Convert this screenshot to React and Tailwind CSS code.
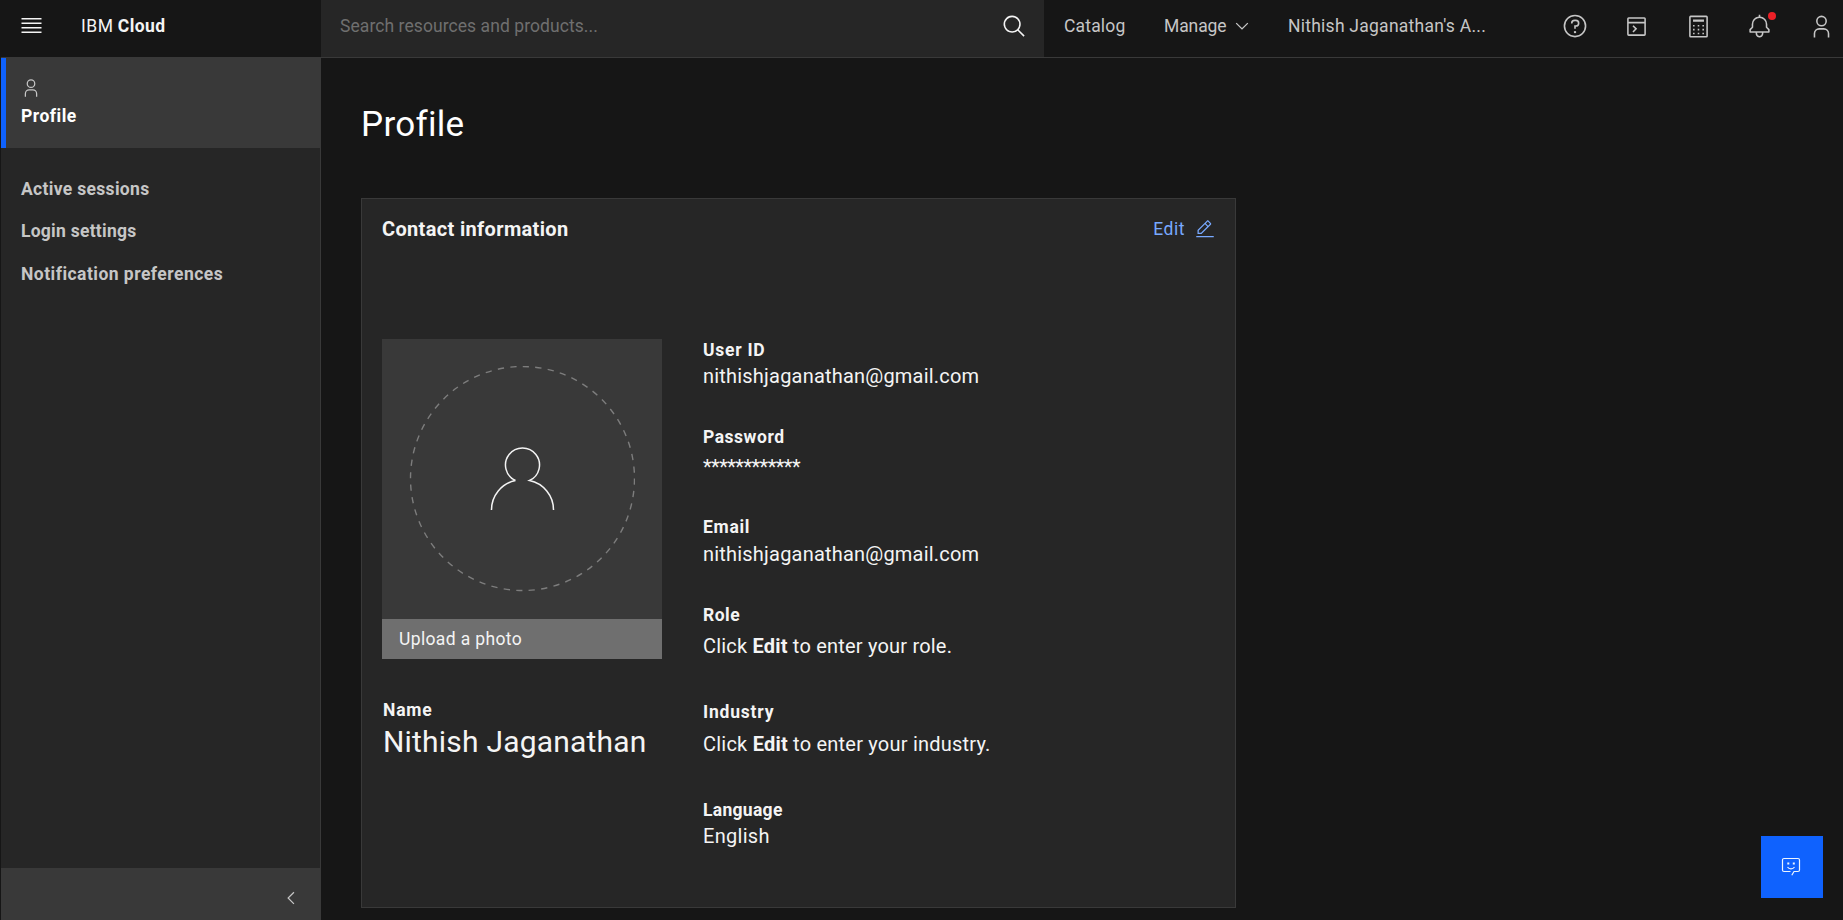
import React from "react";

const Svg = ({ size, children, className = "" }) => (
  <svg viewBox="0 0 32 32" width={size} height={size} fill="currentColor" className={`shrink-0 ${className}`}>{children}</svg>
);

const UserPath = () => (
  <path d="M16 4a5 5 0 1 1-5 5 5 5 0 0 1 5-5m0-2a7 7 0 1 0 7 7 7 7 0 0 0-7-7zM26 30h-2v-5a5 5 0 0 0-5-5h-6a5 5 0 0 0-5 5v5H6v-5a7 7 0 0 1 7-7h6a7 7 0 0 1 7 7z" />
);

function Header() {
  return (
    <header className="flex h-[58px] shrink-0 border-b border-[#393939] text-[17.5px] leading-6 text-[#c6c6c6]">
      <div className="flex w-[320px] shrink-0 pt-[13px]">
        <svg viewBox="0 0 20 20" width="25" height="25" fill="#f4f4f4" className="ml-[18px] shrink-0">
          <path d="M2 14.8h16V16H2zM2 11.2h16v1.2H2zM2 7.6h16v1.2H2zM2 4h16v1.2H2z" />
        </svg>
        <div className="ml-[37px] mt-px whitespace-nowrap text-[#f4f4f4]">
          <span className="tracking-[0.5px]">IBM</span> <b className="font-bold tracking-[0.4px]">Cloud</b>
        </div>
      </div>
      <div className="flex w-[723px] shrink-0 justify-between bg-[#262626] pl-[19px] pr-[17px] pt-[14px] tracking-[0.07px] text-[#6f6f6f]">
        <span>Search resources and products...</span>
        <Svg size={25} className="text-[#f4f4f4]">
          <path d="m29 27.586-7.552-7.552a11.018 11.018 0 1 0-1.414 1.414L27.586 29ZM4 13a9 9 0 1 1 9 9 9.01 9.01 0 0 1-9-9Z" />
        </Svg>
      </div>
      <nav className="flex w-[500px] shrink-0 pl-5 pt-[14px] whitespace-nowrap">
        <div className="w-[100px] tracking-[0.18px]">Catalog</div>
        <div className="flex w-[124px] justify-between pr-9 tracking-[-0.1px]">
          Manage
          <svg viewBox="0 0 16 16" width="20" height="20" fill="currentColor" className="mt-[2px] shrink-0"><path d="M8 11 3 6l.7-.7L8 9.6l4.3-4.3.7.7z" /></svg>
        </div>
        <span className="tracking-[0.25px]">Nithish Jaganathan's A...</span>
      </nav>
      <div className="grid h-[52px] shrink-0 grid-cols-[61px_62px_62px_61px_62px] place-items-center">
        <Svg size={26}>
          <path d="M16 2a14 14 0 1 0 14 14A14 14 0 0 0 16 2zm0 26a12 12 0 1 1 12-12 12 12 0 0 1-12 12z" />
          <circle cx="16" cy="23.5" r="1.5" />
          <path d="M17 8h-1.5A4.49 4.49 0 0 0 11 12.5v.5h2v-.5a2.5 2.5 0 0 1 2.5-2.5H17a2.5 2.5 0 0 1 0 5h-2v4.5h2V17a4.5 4.5 0 0 0 0-9z" />
        </Svg>
        <Svg size={25}>
          <path d="M6 4h20a2 2 0 0 1 2 2v20a2 2 0 0 1-2 2H6a2 2 0 0 1-2-2V6a2 2 0 0 1 2-2zM6 6v4h20V6zM6 12v14h20V12z" fillRule="evenodd" />
          <path d="m11.500 15 4 4-4 4" fill="none" stroke="currentColor" strokeWidth="2" />
        </Svg>
        <Svg size={25}>
          <path d="M26 4v24H6V4h20m0-2H6a2 2 0 0 0-2 2v24a2 2 0 0 0 2 2h20a2 2 0 0 0 2-2V4a2 2 0 0 0-2-2z" />
          <path d="M9 7h14v3H9zM9 14h2v2H9zM15 14h2v2h-2zM21 14h2v2h-2zM9 19h2v2H9zM15 19h2v2h-2zM21 19h2v2h-2zM9 24h2v2H9zM15 24h2v2h-2zM21 24h2v2h-2z" />
        </Svg>
        <div className="relative">
          <Svg size={25}><path d="M28.707 19.293 26 16.586V13a10.014 10.014 0 0 0-9-9.95V1h-2v2.05A10.014 10.014 0 0 0 6 13v3.586l-2.707 2.707A1 1 0 0 0 3 20v3a1 1 0 0 0 1 1h7v.777a5.152 5.152 0 0 0 4.5 5.199A5.006 5.006 0 0 0 21 25v-1h7a1 1 0 0 0 1-1v-3a1 1 0 0 0-.293-.707zM19 25a3 3 0 0 1-6 0v-1h6zm8-3H5v-1.586l2.707-2.707A1 1 0 0 0 8 17v-4a8 8 0 0 1 16 0v4a1 1 0 0 0 .293.707L27 20.414z" /></Svg>
          <span className="absolute -top-[2px] left-[21px] size-2 rounded-full bg-[#ec2027]" />
        </div>
        <Svg size={25}><UserPath /></Svg>
      </div>
    </header>
  );
}

function Sidebar() {
  return (
    <aside className="flex w-[320px] shrink-0 flex-col border-r border-[#393939] bg-[#262626] text-[17.5px] font-bold leading-6 text-[#c6c6c6]">
      <div className="-mr-px h-[90px] border-l-[5px] border-[#0f62fe] bg-[#393939] pl-[15px] pt-5">
        <Svg size={20}><UserPath /></Svg>
        <div className="mt-1.5 tracking-[0.49px] text-white">Profile</div>
      </div>
      <nav className="flex flex-col gap-[18px] pl-5 pt-[29px]">
        <div className="tracking-[0.32px]">Active sessions</div>
        <div className="tracking-[0.26px]">Login settings</div>
        <div className="mt-px tracking-[0.47px]">Notification preferences</div>
      </nav>
      <div className="-mr-px mt-auto flex h-[52px] items-center justify-end bg-[#393939] pr-[20px] pt-2">
        <svg viewBox="0 0 16 16" width="20" height="20" fill="currentColor"><path d="m5 8 5-5 .7.7L6.4 8l4.3 4.3-.7.7z" /></svg>
      </div>
    </aside>
  );
}

function Field({ label, labelClass, className = "", valueClass, children }) {
  return (
    <div className={className}>
      <div className={`text-[17.5px] font-bold leading-6 ${labelClass}`}>{label}</div>
      <div className={`text-xl leading-7 ${valueClass}`}>{children}</div>
    </div>
  );
}

function Card() {
  return (
    <section className="h-[710px] w-[875px] border border-[#393939] bg-[#262626] px-5 pt-4 text-[#f4f4f4]">
      <div className="flex justify-between">
        <h2 className="text-xl font-bold leading-7 tracking-[0.34px]">Contact information</h2>
        <a className="flex gap-[10px] pt-[2px] text-[17.5px] leading-6 tracking-[0.55px] text-[#78a9ff]">
          Edit
          <Svg size={20} className="mt-0.5"><path d="M2 27h28v2H2zM25.4 9c.8-.8.8-2 0-2.8l-3.6-3.6c-.8-.8-2-.8-2.8 0l-15 15V24h6.4zm-5-5L24 7.6l-3 3L17.400 7zM6 22v-3.600l10-10 3.600 3.600-10 10z" /></Svg>
        </a>
      </div>
      <div className="mt-[95px] flex gap-10">
        <div className="w-[280px] pt-px">
          <div className="flex h-[280px] items-center justify-center bg-[#393939]">
            <svg viewBox="0 0 226 226" width="226" height="226" fill="none">
              <circle cx="113.500" cy="112.500" r="112" stroke="#7d7d7d" strokeWidth="1.400" strokeDasharray="6.280 6.280" />
              <path d="M106.500 114.500a17 17 0 1 1 14 0a30 30 0 0 1 24 29.500M106.500 114.500a30 30 0 0 0-24 29.500" stroke="#f4f4f4" strokeWidth="1.500" />
            </svg>
          </div>
          <div className="h-10 bg-[#6f6f6f] pl-[17px] pt-2 text-[17.5px] leading-6 tracking-[0.36px]">Upload a photo</div>
          <div className="mt-[39px] pl-px text-[17.5px] font-bold leading-6 tracking-[0.8px]">Name</div>
          <div className="mt-0.5 whitespace-nowrap pl-px text-[30px] leading-9 tracking-[0.2px]">Nithish Jaganathan</div>
        </div>
        <div className="pl-px">
          <Field label="User ID" labelClass="tracking-[0.75px]" valueClass="tracking-[0.2px]">nithishjaganathan@gmail.com</Field>
          <Field label="Password" labelClass="tracking-[0.52px]" className="mt-[35px]" valueClass="translate-y-1 tracking-[-0.53px]">************</Field>
          <Field label="Email" labelClass="tracking-[0.7px]" className="mt-[38px]" valueClass="mt-px tracking-[0.2px]">nithishjaganathan@gmail.com</Field>
          <Field label="Role" labelClass="tracking-[0.5px]" className="mt-[35px]" valueClass="mt-[5px] tracking-[0.2px]">Click <b>Edit</b> to enter your role.</Field>
          <Field label="Industry" labelClass="tracking-[0.8px]" className="mt-10" valueClass="mt-1.5 tracking-[0.22px]">Click <b>Edit</b> to enter your industry.</Field>
          <Field label="Language" labelClass="tracking-[0.3px]" className="mt-10" valueClass="tracking-[0.3px]">English</Field>
        </div>
      </div>
    </section>
  );
}

export default function App() {
  return (
    <div className="flex h-[920px] w-[1843px] flex-col overflow-hidden bg-[#161616] pl-px font-['Roboto',sans-serif]">
      <Header />
      <div className="flex min-h-0 grow">
        <Sidebar />
        <main className="w-[1400px] shrink-0 pl-10 pt-[45px]">
          <h1 className="text-[35px] leading-[44px] tracking-[0.3px] text-white">Profile</h1>
          <div className="mt-[51px]"><Card /></div>
        </main>
      </div>
      <button className="absolute left-[1761px] top-[836px] flex size-[62px] items-center justify-center bg-[#0f62fe] text-[#edf5ff]">
        <svg viewBox="0 0 20 20" width="20" height="20" fill="none" stroke="currentColor" strokeWidth="1.200" className="-ml-0.5">
          <path d="M9.500 14.500H3A1.500 1.500 0 0 1 1.500 13V3A1.500 1.500 0 0 1 3 1.500h14A1.500 1.500 0 0 1 18.500 3v10a1.500 1.500 0 0 1-1.500 1.500H13L10.800 18.300" />
          <path d="M6.500 10a4.200 4.200 0 0 0 7 0" />
          <path d="M6.300 5.500h2v2h-2zM11.800 5.500h2v2h-2z" fill="currentColor" stroke="none" />
        </svg>
      </button>
    </div>
  );
}
